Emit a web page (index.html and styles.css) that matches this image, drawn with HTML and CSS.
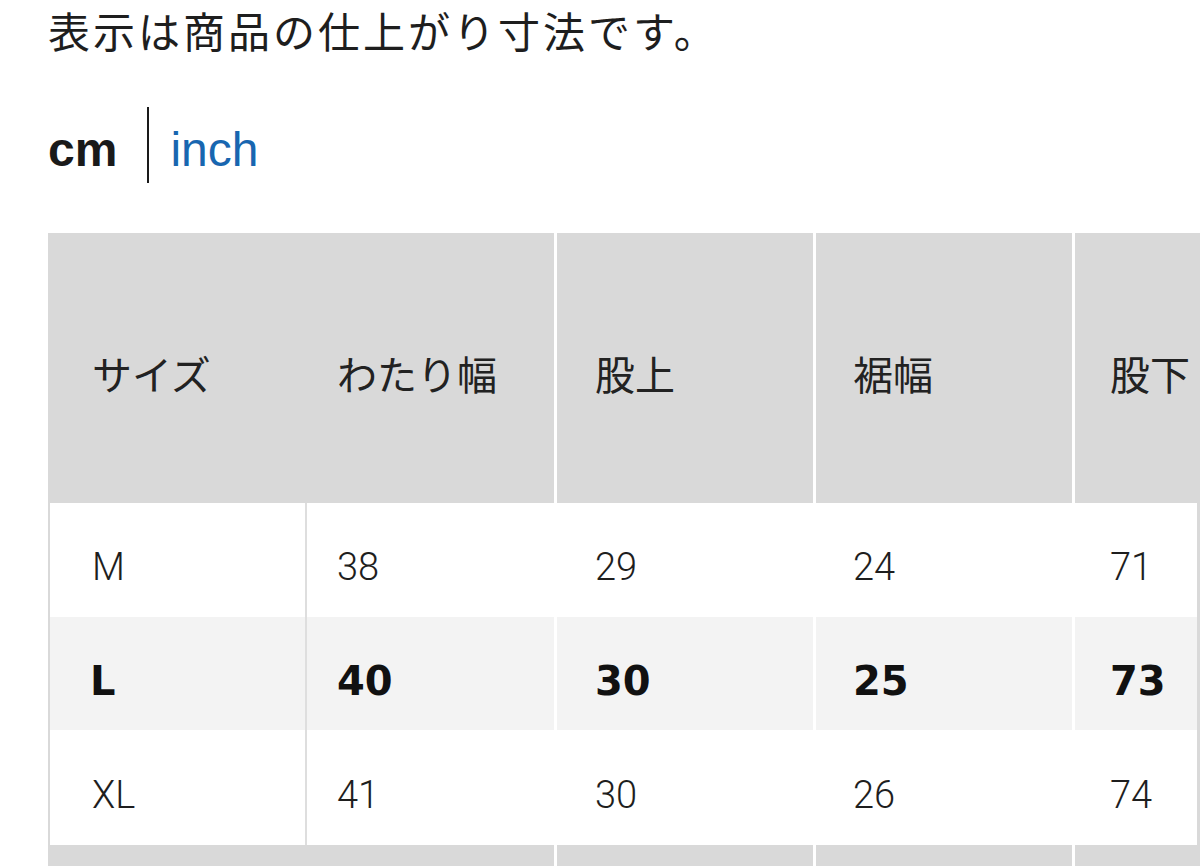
FILE: index.html
```html
<!DOCTYPE html>
<html lang="ja">
<head>
<meta charset="utf-8">
<title>サイズ表</title>
<link rel="stylesheet" href="styles.css">
</head>
<body>
<main class="page">
  <p class="note">表示は商品の仕上がり寸法です。</p>
  <div class="units">
    <span class="unit unit-active">cm</span>
    <span class="unit-sep"></span>
    <a class="unit unit-link">inch</a>
  </div>
  <div class="table-wrap">
    <div class="size-table">
      <div class="cell head c1">サイズ</div>
      <div class="cell head c2">わたり幅</div>
      <div class="cell head c3">股上</div>
      <div class="cell head c4">裾幅</div>
      <div class="cell head c5">股下</div>

      <div class="cell body c1">M</div>
      <div class="cell body c2">38</div>
      <div class="cell body c3">29</div>
      <div class="cell body c4">24</div>
      <div class="cell body c5">71</div>

      <div class="cell body sel c1">L</div>
      <div class="cell body sel c2">40</div>
      <div class="cell body sel c3">30</div>
      <div class="cell body sel c4">25</div>
      <div class="cell body sel c5">73</div>

      <div class="cell body c1">XL</div>
      <div class="cell body c2">41</div>
      <div class="cell body c3">30</div>
      <div class="cell body c4">26</div>
      <div class="cell body c5">74</div>

      <div class="cell foot c1"></div>
      <div class="cell foot c2"></div>
      <div class="cell foot c3"></div>
      <div class="cell foot c4"></div>
      <div class="cell foot c5"></div>
    </div>
  </div>
</main>
</body>
</html>
```

FILE: styles.css
```css
html, body {
  margin: 0;
  padding: 0;
  background: #ffffff;
  overflow: hidden;
}

.page {
  padding-left: 48px;
  width: 1200px;
  box-sizing: border-box;
  color: #222222;
}

.note {
  margin: 0;
  font-family: "Noto Sans CJK JP", sans-serif;
  font-size: 42px;
  line-height: 60px;
  letter-spacing: 3px;
  white-space: nowrap;
  color: #1e1e1e;
}

.units {
  display: flex;
  align-items: flex-start;
  height: 76px;
  margin-top: 47px;
}

.unit {
  font-family: "Liberation Sans", Arial, sans-serif;
  font-size: 48px;
  line-height: 60px;
  padding-top: 13px;
}

.unit-active {
  font-weight: 700;
  color: #1a1a1a;
}

.unit-sep {
  width: 2px;
  height: 76px;
  background: #1a1a1a;
  margin-left: 30px;
}

.unit-link {
  color: #1866b0;
  margin-left: 21px;
  text-decoration: none;
}

.table-wrap {
  margin-top: 50px;
  overflow: hidden;
}

.size-table {
  display: grid;
  grid-template-columns: 257px 250px 259px 259px 122px;
  grid-template-rows: 270px 114px 113px 115px 21px;
  padding: 0 3px 0 2px;
  background: #d9d9d9;
}

.cell {
  display: flex;
  align-items: center;
  box-sizing: border-box;
  white-space: nowrap;
}

.head {
  background: #d9d9d9;
  font-family: "Noto Sans CJK JP", sans-serif;
  font-size: 40px;
  padding-top: 10px;
  color: #222222;
}

.body {
  background: #ffffff;
  font-family: Roboto, "Liberation Sans", sans-serif;
  font-weight: 300;
  font-size: 38px;
  padding-top: 14px;
  color: #1e1e1e;
}

.body.sel {
  background: #f3f3f3;
  font-family: "DejaVu Sans", "Liberation Sans", sans-serif;
  font-weight: 700;
  font-size: 40px;
  letter-spacing: 0;
  color: #111111;
}

.foot {
  background: #d9d9d9;
}

.c1 { padding-left: 42px; }
.c2 { padding-left: 30px; }
.c3 { padding-left: 38px; }
.c4 { padding-left: 37px; }
.c5 { padding-left: 35px; }

.body.sel.c1 { padding-left: 40px; }

.body.c1 { border-right: 2px solid #dedede; }

.c2, .c3, .c4 { border-right: 3px solid #ffffff; }
```
